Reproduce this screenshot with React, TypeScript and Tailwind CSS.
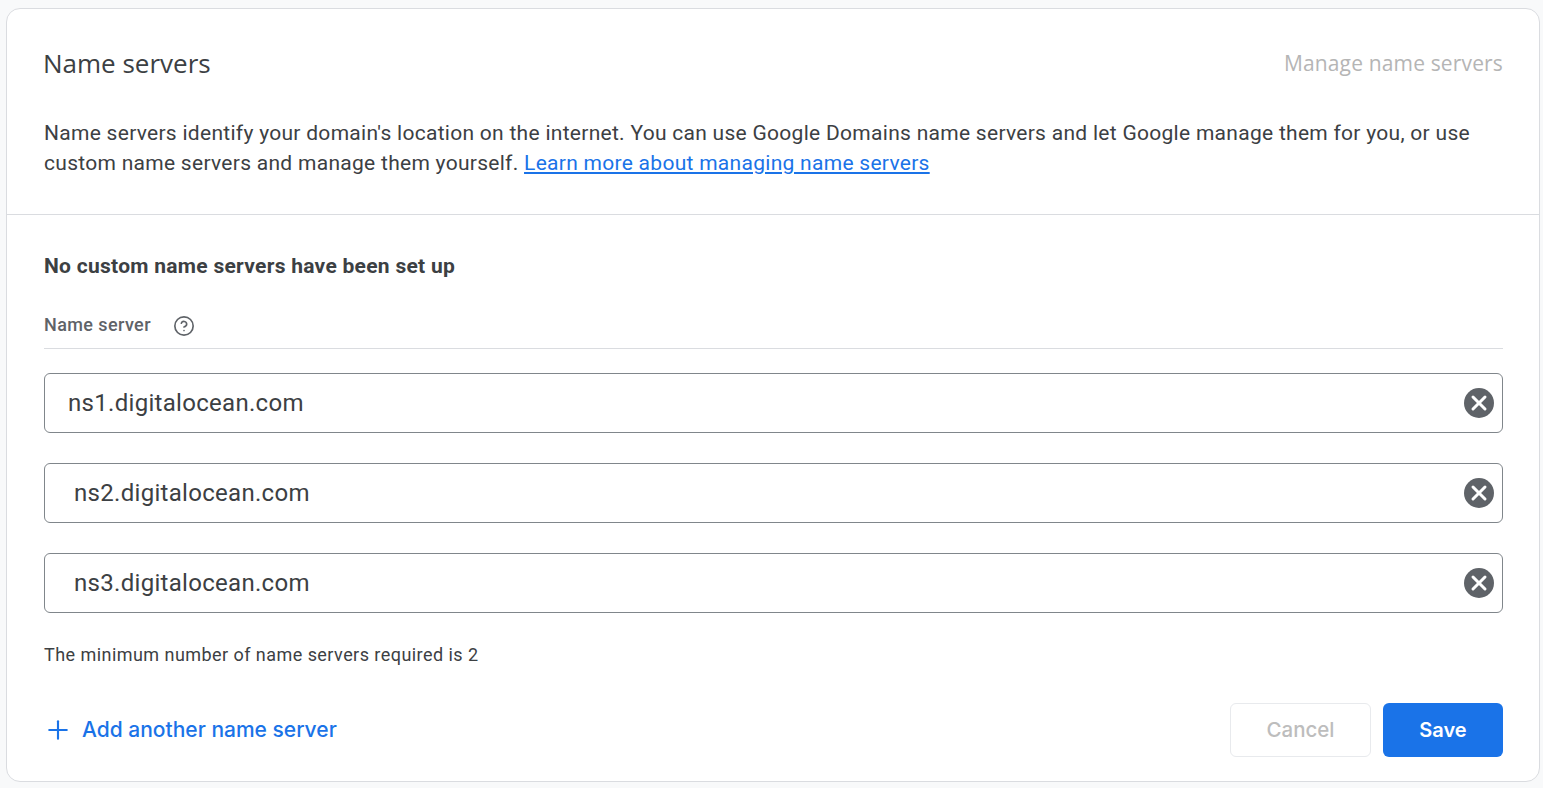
import { HelpCircle, Plus, X } from "lucide-react";

const servers = [
  { value: "ns1.digitalocean.com", inset: "pl-[23px]" },
  { value: "ns2.digitalocean.com", inset: "pl-[29px]" },
  { value: "ns3.digitalocean.com", inset: "pl-[29px]" },
];

function ServerField({ value, inset }: { value: string; inset: string }) {
  return (
    <div className={`flex h-[60px] items-center justify-between rounded-[6px] border border-[#80868b] pr-2 ${inset}`}>
      <span className="text-[24px] leading-[32px] tracking-[0.3px] text-[#3c4043]">{value}</span>
      <span className="flex h-[30px] w-[30px] items-center justify-center rounded-full bg-[#5f6368]">
        <X size={24} strokeWidth={3} color="#ffffff" />
      </span>
    </div>
  );
}

export default function App() {
  return (
    <div className="h-[788px] overflow-hidden bg-[#f8f9fa] pt-2 pr-[3px] pl-[6px] font-['Roboto',sans-serif]">
      <div className="flex h-[774px] flex-col rounded-[14px] border border-[#dadce0] bg-white">
        <div className="border-b border-[#dadce0] pt-[34px] pr-[36px] pb-[36px] pl-[37px]">
          <div className="flex h-[40px] items-center justify-between">
            <h2 className="-ml-px font-['Open_Sans',sans-serif] text-[26px] leading-[40px] text-[#3c4043]">Name servers</h2>
            <a className="font-['Open_Sans',sans-serif] text-[21px] leading-[28px] tracking-[0.15px] text-[#b5b5b5]">Manage name servers</a>
          </div>
          <p className="mt-[35px] text-[21px] leading-[30px] tracking-[0.285px] text-[#3c4043]">
            Name servers identify your domain's location on the internet. You can use Google Domains name servers and let Google manage them for you, or use custom name servers and manage them yourself.{" "}
            <a className="text-[#1a73e8] underline">Learn more about managing name servers</a>
          </p>
        </div>

        <div className="flex flex-1 flex-col pt-[37px] pr-[36px] pl-[37px]">
          <h3 className="text-[21px] leading-[28px] font-bold tracking-[0.28px] text-[#3c4043]">No custom name servers have been set up</h3>
          <div className="mt-[31px] flex h-[38px] items-start gap-[22px] border-b border-[#dadce0] pt-[2px]">
            <span className="text-[18px] leading-[24px] font-medium tracking-[0.4px] text-[#5f6368]">Name server</span>
            <HelpCircle size={22} strokeWidth={1.8} color="#5f6368" className="mt-[2px]" />
          </div>
          <div className="mt-6 flex flex-col gap-[30px]">
            {servers.map((s) => (
              <ServerField key={s.value} value={s.value} inset={s.inset} />
            ))}
          </div>
          <p className="mt-[29px] text-[18px] leading-[26px] tracking-[0.45px] text-[#3c4043]">The minimum number of name servers required is 2</p>
          <div className="mt-[35px] flex items-center justify-between">
            <a className="-ml-px flex items-center gap-[9px] font-['Inter',sans-serif] text-[21px] leading-[28px] font-medium text-[#1a73e8]">
              <Plus size={30} strokeWidth={1.7} />
              Add another name server
            </a>
            <div className="flex gap-3">
              <button className="h-[54px] w-[141px] rounded-[6px] border border-[#e8eaed] bg-white font-['Inter',sans-serif] text-[20.5px] font-medium text-[#bdbdbd]">Cancel</button>
              <button className="h-[54px] w-[120px] rounded-[6px] bg-[#1a73e8] font-['Inter',sans-serif] text-[20px] font-semibold text-white">Save</button>
            </div>
          </div>
        </div>
      </div>
    </div>
  );
}
